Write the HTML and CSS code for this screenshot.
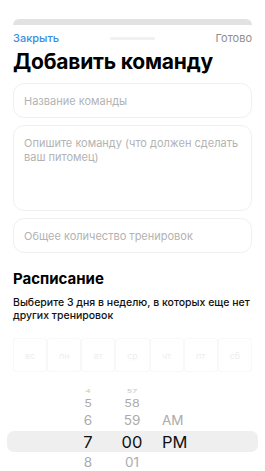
FILE: index.html
```html
<!DOCTYPE html>
<html lang="ru">
<head>
<meta charset="utf-8">
<link rel="stylesheet" href="styles.css">
</head>
<body>
<div class="page">
  <div class="stack-bar"></div>
  <div class="nav">
    <span class="nav-close">Закрыть</span>
    <span class="grabber"></span>
    <span class="nav-done">Готово</span>
  </div>
  <h1 class="title">Добавить команду</h1>
  <div class="field">Название команды</div>
  <div class="field field-area">Опишите команду (что должен сделать ваш питомец)</div>
  <div class="field">Общее количество тренировок</div>
  <h2 class="section">Расписание</h2>
  <p class="hint">Выберите 3 дня в неделю, в которых еще нет других тренировок</p>
  <div class="days">
    <div class="day">вс</div>
    <div class="day">пн</div>
    <div class="day">вт</div>
    <div class="day">ср</div>
    <div class="day">чт</div>
    <div class="day">пт</div>
    <div class="day">сб</div>
  </div>
  <div class="picker">
    <div class="prow r4"><span class="h">4</span><span class="m">57</span><span class="ap"></span></div>
    <div class="prow r5"><span class="h">5</span><span class="m">58</span><span class="ap"></span></div>
    <div class="prow r6"><span class="h">6</span><span class="m">59</span><span class="ap">AM</span></div>
    <div class="prow sel"><span class="h">7</span><span class="m">00</span><span class="ap">PM</span></div>
    <div class="prow r8"><span class="h">8</span><span class="m">01</span><span class="ap"></span></div>
  </div>
</div>
</body>
</html>
```

FILE: styles.css
```css
html, body {
  margin: 0;
  padding: 0;
  background: #ffffff;
}
body {
  font-family: Inter, "Noto Sans", "Liberation Sans", sans-serif;
  color: #000;
  overflow: hidden;
  height: 471px;
}
.page {
  padding: 19px 13px 0 13px;
}
.stack-bar {
  height: 6px;
  background: #e2e2e2;
  border-radius: 7px 7px 0 0;
}
.nav {
  display: grid;
  grid-template-columns: 1fr auto 1fr;
  align-items: center;
  height: 16px;
  margin-top: 5px;
  font-size: 11px;
}
.nav-close {
  color: #3b8de3;
  font-weight: 500;
}
.grabber {
  width: 45px;
  height: 3px;
  border-radius: 2px;
  background: #f1f1f1;
}
.nav-done {
  justify-self: end;
  color: #8e8e8e;
}
.title {
  margin: 3px 0 0 0;
  font-size: 21px;
  font-weight: 700;
  letter-spacing: -0.2px;
  line-height: 26px;
}
.field {
  margin-top: 8px;
  height: 35px;
  box-sizing: border-box;
  border: 1px solid #f0f0f0;
  border-radius: 11px;
  padding: 0 10px;
  display: flex;
  align-items: center;
  font-size: 11px;
  color: #b3b3b3;
  background: #fff;
}
.field + .field {
  margin-top: 7px;
}
.field-area {
  height: 86px;
  align-items: flex-start;
  padding-top: 10px;
  line-height: 14px;
}
.section {
  margin: 17px 0 0 0;
  font-size: 15px;
  font-weight: 700;
  line-height: 18px;
}
.hint {
  margin: 9px 0 0 0;
  font-size: 10.5px;
  line-height: 12.5px;
  font-weight: 500;
  color: #111;
}
.days {
  margin-top: 16px;
  display: grid;
  grid-template-columns: repeat(7, 1fr);
  height: 34px;
}
.day {
  border: 1px solid #f8f8f8;
  border-radius: 3px;
  display: flex;
  align-items: center;
  justify-content: center;
  font-size: 9px;
  color: #eeeeee;
}
.picker {
  margin: 14px -6px 0 -6px;
}
.prow {
  display: flex;
  align-items: center;
  color: #ababab;
}
.prow .h {
  width: 20px;
  margin-left: 71px;
  text-align: center;
}
.prow .m {
  width: 26px;
  margin-left: 21px;
  text-align: center;
}
.prow .ap {
  margin-left: 17px;
}
.r4 {
  height: 10px;
  font-size: 9px;
  transform: scaleY(0.55);
  color: #c8c8c8;
}
.r5 {
  height: 15px;
  font-size: 12.5px;
  transform: scaleY(0.85);
}
.r6 {
  height: 18px;
  font-size: 13.5px;
  transform: scaleY(0.93);
}
.sel {
  height: 21px;
  margin-top: 2px;
  background: #efefef;
  border-radius: 7px;
  font-size: 16.5px;
  color: #111;
}
.r8 {
  height: 19px;
  font-size: 13.5px;
  transform: scaleY(0.93);
}
```
